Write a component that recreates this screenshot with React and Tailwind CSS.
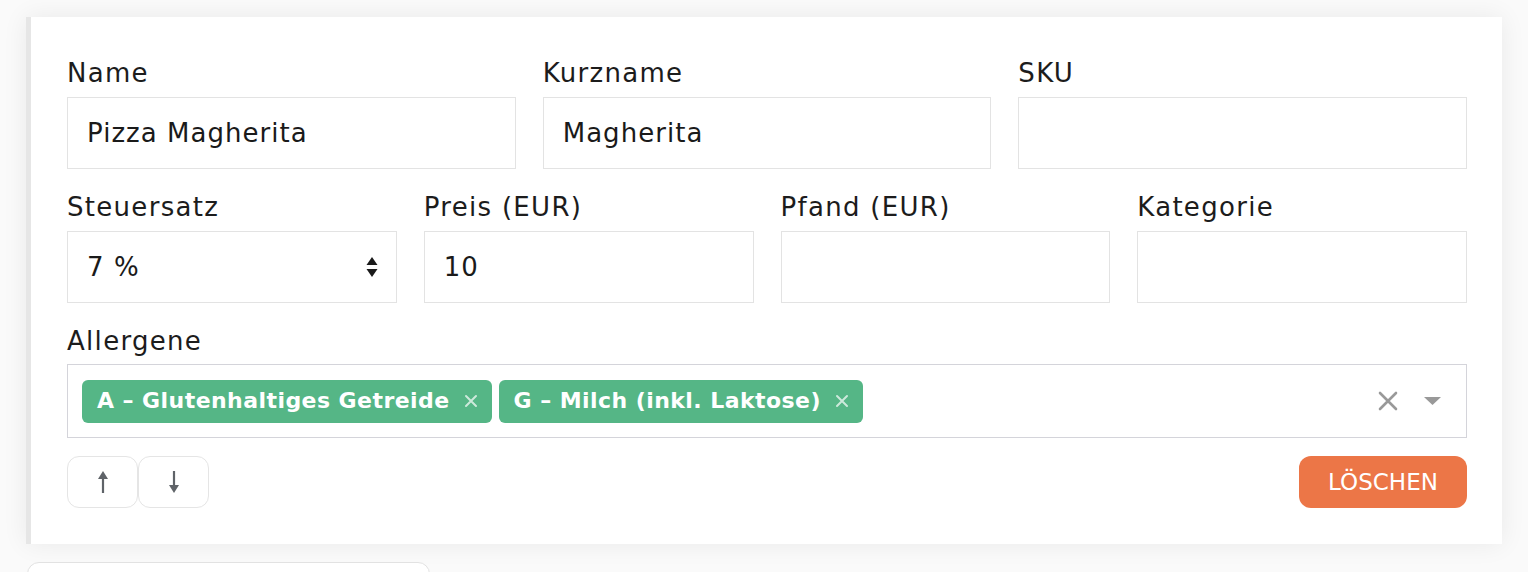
import React from "react";

function Field({ label, value, className = "", children }) {
  return (
    <div className={"flex flex-col " + className}>
      <label className="block text-[26px] leading-[36px] tracking-[0.05em] text-[#1c1c1c] pt-[2px] mb-[6px]">{label}</label>
      <div className="h-[72px] border border-[#e3e3e3] bg-white pl-[19px] pr-[18px] flex items-center justify-between text-[26px] tracking-[0.04em] text-[#1a1a1a]">
        <span>{value}</span>
        {children}
      </div>
    </div>
  );
}

function SelectArrows() {
  return (
    <svg width="12" height="22" viewBox="0 0 12 22">
      <path d="M6 1 L11.5 9 L0.5 9 Z" fill="#1a1a1a" />
      <path d="M6 21 L11.5 13 L0.5 13 Z" fill="#1a1a1a" />
    </svg>
  );
}

function ChipX() {
  return (
    <svg width="14" height="14" viewBox="0 0 14 14">
      <path d="M2 2 L12 12 M12 2 L2 12" stroke="rgba(255,255,255,0.7)" strokeWidth="2" strokeLinecap="round" />
    </svg>
  );
}

function Chip({ text }) {
  return (
    <div className="h-[43px] rounded-[6px] bg-[#55b686] pl-[15px] pr-[14px] flex items-center gap-[14px] text-white font-bold text-[22px] tracking-[0.02em]">
      <span className="-mt-[2px]">{text}</span>
      <ChipX />
    </div>
  );
}

function Arrow({ down }) {
  return (
    <svg width="14" height="24" viewBox="0 0 14 24" style={{ transform: down ? "rotate(180deg)" : "none" }}>
      <path d="M7 8 L7 23" stroke="#5f6368" strokeWidth="2.2" />
      <path d="M7 1 L12 9 L2 9 Z" fill="#5f6368" />
    </svg>
  );
}

export default function App() {
  return (
    <div className="h-[572px] w-full overflow-hidden bg-[#fafafa] pt-[17px] px-[26px] font-['DejaVu_Sans',sans-serif]">
      <div className="bg-white border-l-[5px] border-[#e6e6e6] shadow-[0_0_24px_rgba(0,0,0,0.07)] pt-[36px] pb-[36px] pl-[36px] pr-[35px] flex flex-col gap-[18px]">
        <div className="grid grid-cols-3 gap-x-[27px]">
          <Field label="Name" value="Pizza Magherita" />
          <Field label="Kurzname" value="Magherita" />
          <Field label="SKU" value="" />
        </div>
        <div className="grid grid-cols-4 gap-x-[27px]">
          <Field label="Steuersatz" value="7 %">
            <SelectArrows />
          </Field>
          <Field label="Preis (EUR)" value="10" />
          <Field label="Pfand (EUR)" value="" />
          <Field label="Kategorie" value="" />
        </div>
        <div className="flex flex-col">
          <label className="block text-[26px] leading-[36px] tracking-[0.05em] text-[#1c1c1c] pt-[2px] mb-[5px]">Allergene</label>
          <div className="h-[74px] border border-[#d4d4da] bg-white pl-[14px] pr-[25px] flex items-center">
            <div className="flex items-center gap-[7px] flex-1">
              <Chip text="A – Glutenhaltiges Getreide" />
              <Chip text="G – Milch (inkl. Laktose)" />
            </div>
            <div className="flex items-center gap-[26px]">
              <svg width="20" height="20" viewBox="0 0 20 20">
                <path d="M2 2 L18 18 M18 2 L2 18" stroke="#999999" strokeWidth="2.6" strokeLinecap="round" />
              </svg>
              <svg width="17" height="8" viewBox="0 0 17 8">
                <path d="M0 0 L17 0 L8.5 8 Z" fill="#999999" />
              </svg>
            </div>
          </div>
        </div>
        <div className="flex items-center justify-between">
          <div className="flex">
            <button className="w-[71px] h-[52px] rounded-[12px] border border-[#e5e5e5] bg-white flex items-center justify-center">
              <Arrow />
            </button>
            <button className="w-[71px] h-[52px] rounded-[12px] border border-[#e5e5e5] bg-white flex items-center justify-center">
              <Arrow down />
            </button>
          </div>
          <button className="w-[168px] h-[52px] rounded-[12px] bg-[#ec7647] text-white text-[23px] flex items-center justify-center">
            LÖSCHEN
          </button>
        </div>
      </div>
      <div className="mt-[18px] ml-px w-[403px] h-[40px] rounded-[12px] border border-[#e2e2e2] bg-white" />
    </div>
  );
}
